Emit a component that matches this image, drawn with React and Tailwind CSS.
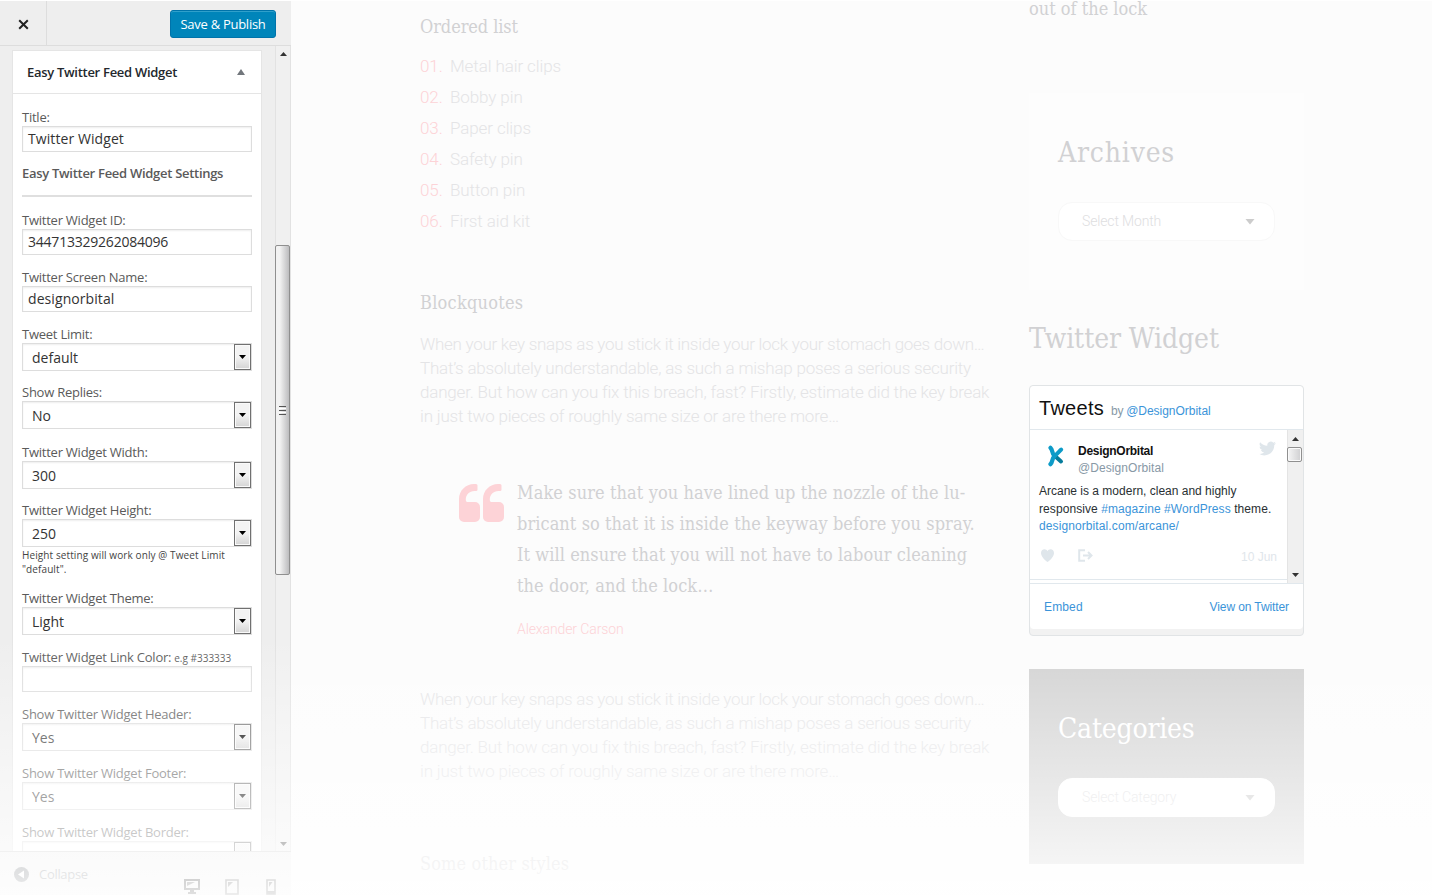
import React from "react";

const SERIF = "font-['DejaVu_Serif_Condensed','DejaVu_Serif',serif] [font-stretch:condensed]";

function Label({ children, note, className = "" }) {
  return (
    <div className={`h-[18px] leading-[18px] text-[13px] tracking-[-0.24px] text-[#5a5a5a] whitespace-nowrap ${className}`}>
      {children}
      {note && <span className="ml-[3px] text-[10px] tracking-normal">{note}</span>}
    </div>
  );
}

function TextInput({ value, className = "" }) {
  return (
    <div className={`h-[26px] border border-[#ddd] bg-white px-[5px] text-[14px] leading-[24px] text-[#333] shadow-[inset_0_1px_2px_rgba(0,0,0,0.07)] whitespace-nowrap ${className}`}>
      {value}
    </div>
  );
}

function Select({ value }) {
  return (
    <div className="flex h-7 items-stretch justify-between border border-[#ddd] bg-white pl-[9px] text-[14px] leading-[27px] text-[#333] shadow-[inset_0_1px_2px_rgba(0,0,0,0.07)]">
      <span>{value}</span>
      <span className="flex w-[17px] items-center justify-center border border-[#707070] bg-linear-to-b from-[#f3f3f3] from-50% to-[#d4d4d4] shadow-[inset_0_0_0_1px_#fafafa]">
        <svg width="7" height="4" viewBox="0 0 7 4"><path d="M0 0h7L3.5 4z" fill="#000" /></svg>
      </span>
    </div>
  );
}

function Arrow({ up, className = "" }) {
  return (
    <svg className={className} width="7" height="4" viewBox="0 0 7 4">
      <path d={up ? "M0 4h7L3.5 0z" : "M0 0h7L3.5 4z"} fill="#333" />
    </svg>
  );
}

function Sidebar() {
  return (
    <aside className="flex h-[895px] w-[291px] flex-none flex-col border-t border-[#fafafa] bg-[#eee] font-['Open_Sans',sans-serif]">
      <header className="flex h-[45px] flex-none justify-between border-b border-[#ddd]">
        <div className="flex w-[47px] items-center justify-center border-r border-[#ddd]">
          <svg width="11" height="11" viewBox="0 0 11 11" className="mt-[2px]"><path d="M1.2 1.2l8.6 8.6M9.8 1.2L1.2 9.8" stroke="#222" strokeWidth="2" /></svg>
        </div>
        <div className="mr-[15px] mt-[9px] h-[28px] w-[106px] rounded-[3px] border border-[#0073aa] bg-[#0085ba] text-center text-[13px] leading-[26px] tracking-[-0.27px] text-white shadow-[inset_0_1px_0_rgba(120,200,230,0.4)]">
          Save &amp; Publish
        </div>
      </header>
      <div className="flex h-[805px] flex-none overflow-hidden">
        <div className="flex-1 pl-3 pt-1">
          <section className="h-[900px] w-[250px] border border-[#e5e5e5] bg-white">
            <div className="flex h-[43px] items-center justify-between border-b border-[#e5e5e5] pl-[14px] pr-[16px] text-[13px] font-semibold tracking-[-0.29px] text-[#23282d]">
              <span className="pt-px">Easy Twitter Feed Widget</span>
              <svg width="8" height="6" viewBox="0 0 8 6"><path d="M0 6h8L4 0z" fill="#72777c" /></svg>
            </div>
            <div className="pl-[9px] pr-[9px] pt-[14px]">
              <Label>Title:</Label>
              <TextInput value="Twitter Widget" className="tracking-[0.08px]" />
              <h3 className="mt-3 h-[18px] text-[13px] font-semibold leading-[18px] tracking-[-0.29px] text-[#5a5a5a] whitespace-nowrap">Easy Twitter Feed Widget Settings</h3>
              <div className="mt-[13px] h-[2px] bg-[#dfdfdf]" />
              <Label className="mt-[14px]">Twitter Widget ID:</Label>
              <TextInput value="344713329262084096" className="tracking-[-0.22px]" />
              <Label className="mt-[13px]">Twitter Screen Name:</Label>
              <TextInput value="designorbital" className="tracking-[0.08px]" />
              <Label className="mt-[13px]">Tweet Limit:</Label>
              <Select value="default" />
              <Label className="mt-[12px]">Show Replies:</Label>
              <Select value="No" />
              <Label className="mt-[14px]">Twitter Widget Width:</Label>
              <Select value="300" />
              <Label className="mt-[12px]">Twitter Widget Height:</Label>
              <Select value="250" />
              <p className="mt-[1px] h-[29px] text-[10px] leading-[14px] tracking-[0.1px] text-[#444]">Height setting will work only @ Tweet Limit<br />"default".</p>
              <Label className="mt-[12px]">Twitter Widget Theme:</Label>
              <Select value="Light" />
              <Label className="mt-[13px]" note="e.g #333333">Twitter Widget Link Color:</Label>
              <TextInput value="" />
              <Label className="mt-[13px]">Show Twitter Widget Header:</Label>
              <Select value="Yes" />
              <Label className="mt-[13px]">Show Twitter Widget Footer:</Label>
              <Select value="Yes" />
              <Label className="mt-[13px]">Show Twitter Widget Border:</Label>
              <Select value="" />
            </div>
          </section>
        </div>
        <div className="flex w-4 flex-none flex-col items-center border-x border-[#e2e2e2] bg-[#f0f0f0]">
          <Arrow up className="mt-[6px] flex-none" />
          <div className="mt-[189px] ml-[-1px] flex h-[330px] w-[15px] flex-none flex-col items-center justify-center gap-px self-start rounded-[2px] border border-[#8f8f8f] bg-linear-to-r from-[#f2f2f2] from-30% to-[#bcbcbe]">
            <div className="h-px w-[7px] bg-[#555]" /><div className="h-px w-[7px] bg-white" />
            <div className="h-px w-[7px] bg-[#555]" /><div className="h-px w-[7px] bg-white" />
            <div className="h-px w-[7px] bg-[#555]" />
          </div>
          <Arrow className="mt-[267px] flex-none" />
        </div>
      </div>
      <footer className="flex flex-1 overflow-hidden border-t border-[#ccc] pl-[14px]">
        <svg className="mt-[15px] flex-none" width="15" height="15" viewBox="0 0 15 15"><circle cx="7.5" cy="7.5" r="7.5" fill="#62676c" /><path d="M10 3.5v8l-6-4z" fill="#fff" /></svg>
        <span className="ml-[10px] mt-[13px] h-[18px] text-[13px] leading-[19px] tracking-[-0.3px] text-[#72777c]">Collapse</span>
        <svg className="ml-[96px] mt-[27px] flex-none" width="16" height="15" viewBox="0 0 16 15"><path d="M1 1h14v9H1z" fill="none" stroke="#000" strokeWidth="2" /><path d="M6 10h4v3h2v2H4v-2h2z" fill="#000" /><path d="M3 3h8L3 7z" fill="#333" /></svg>
        <svg className="ml-[25px] mt-[27px] flex-none" width="14" height="16" viewBox="0 0 14 16"><path d="M1 1h12v14H1z" fill="none" stroke="#444" strokeWidth="1.6" /><path d="M3 3h5L3 8z" fill="#444" /></svg>
        <svg className="ml-[27px] mt-[27px] flex-none" width="10" height="16" viewBox="0 0 10 16"><path d="M1 1h8v14H1z" fill="none" stroke="#444" strokeWidth="1.6" /><path d="M3 3h3.500L3 8zM1 12h8v3H1z" fill="#444" /></svg>
      </footer>
    </aside>
  );
}

const ITEMS = ["Metal hair clips", "Bobby pin", "Paper clips", "Safety pin", "Button pin", "First aid kit"];

function Paragraph({ className = "" }) {
  return (
    <p className={`text-[17px] font-light leading-[24px] text-[#e4e4e6] whitespace-nowrap ${className}`}>
      <span className="tracking-[-0.28px]">When your key snaps as you stick it inside your lock your stomach goes down…</span><br />
      <span className="tracking-[-0.21px]">That’s absolutely understandable, as such a mishap poses a serious security</span><br />
      <span className="tracking-[-0.19px]">danger. But how can you fix this breach, fast? Firstly, estimate did the key break</span><br />
      <span className="tracking-[-0.19px]">in just two pieces of roughly same size or are there more…</span>
    </p>
  );
}

const QUOTE_MARK = "M17 0h-2C6.700 0 0 6.700 0 15v18a5 5 0 0 0 5 5h11a5 5 0 0 0 5-5V23a5 5 0 0 0-5-5H9c-1.500 0-2.200-.8-2.200-2.300C6.800 10.500 10.300 7 15.500 7H17a1.500 1.500 0 0 0 1.500-1.500v-4A1.500 1.500 0 0 0 17 0z";

function Article() {
  const heading = `h-6 text-[18px] leading-6 text-[#d1d1d3] ${SERIF}`;
  return (
    <main className="w-[609px] flex-none pt-[15px] font-['Roboto',sans-serif]">
      <h2 className={`tracking-[-0.08px] ${heading}`}>Ordered list</h2>
      <ol className="mt-[12px] text-[17px] font-light leading-[31px] tracking-[-0.1px] text-[#e4e4e6]">
        {ITEMS.map((t, i) => (
          <li key={t} className="flex h-[31px]"><span className="w-[30px] text-[#fdd3d7]">0{i + 1}.</span>{t}</li>
        ))}
      </ol>
      <h2 className={`mt-[54px] tracking-[0.25px] ${heading}`}>Blockquotes</h2>
      <Paragraph className="mt-[17px]" />
      <blockquote className="mt-[49px] flex pl-[39px]">
        <svg className="mt-[7px] flex-none" width="45" height="38" viewBox="0 0 45 38" fill="#fdd3d7">
          <path d={QUOTE_MARK} />
          <path transform="translate(24)" d={QUOTE_MARK} />
        </svg>
        <div className="ml-[13px]">
          <p className={`text-[18px] leading-[31px] tracking-[0.07px] text-[#d1d1d3] whitespace-nowrap ${SERIF}`}>
            <span className="tracking-[0.1px]">Make sure that you have lined up the nozzle of the lu-</span><br />
            bricant so that it is inside the keyway before you spray.<br />
            It will ensure that you will not have to labour cleaning<br />
            the door, and the lock…
          </p>
          <cite className="mt-[19px] block h-[19px] text-[14px] font-light not-italic leading-[18px] tracking-[-0.1px] text-[#fdd3d7]">Alexander Carson</cite>
        </div>
      </blockquote>
      <Paragraph className="mt-[48px]" />
      <h2 className={`mt-[69px] tracking-[0.12px] ${heading}`}>Some other styles</h2>
    </main>
  );
}

function PillSelect({ children, className = "" }) {
  return (
    <div className={`flex h-[39px] w-[217px] items-center justify-between rounded-[14px] border bg-white pl-[23px] pr-[19px] font-['Roboto',sans-serif] text-[14px] font-light tracking-[-0.15px] ${className}`}>
      <span>{children}</span>
      <svg width="10" height="6" viewBox="0 0 10 6"><path d="M.5 0h9L5 5.500z" fill="#ccc" /></svg>
    </div>
  );
}

function TweetsWidget() {
  const link = "text-[#3b94d9]";
  return (
    <div className="mt-[26px] h-[251px] w-[275px] rounded-[4px] border border-[#e1e4e6] bg-[#f2f2f2] font-['Liberation_Sans',Arial,sans-serif] text-[12px] text-[#292f33]">
      <div className="flex h-[243px] flex-col rounded-[4px] bg-white">
        <div className="flex h-[44px] flex-none items-baseline border-b border-[#e1e8ed] pl-[9px] pt-[8px]">
          <span className="text-[20px] leading-[28px] tracking-[0.28px] text-[#111]">Tweets</span>
          <span className="ml-[7px] tracking-[-0.3px] text-[#8899a6]">by</span>
          <span className={`ml-[3px] tracking-[-0.02px] ${link}`}>@DesignOrbital</span>
        </div>
        <div className="flex h-[153px] flex-none">
          <div className="flex-1">
            <div className="h-[150px] border-b border-[#e1e8ed] pl-[9px] pr-[10px] pt-[12px]">
              <div className="flex">
                <svg className="ml-[8px] mt-[3px] flex-none" width="18" height="22" viewBox="0 0 18 22" fill="none" strokeLinecap="round">
                  <path d="M8.500 11.500l5.500 5" stroke="#067c9c" strokeWidth="4" />
                  <path d="M3.500 2.800C6 5 4.500 8 7.500 11" stroke="#0d9bc8" strokeWidth="4.200" />
                  <path d="M7.500 11C4.500 14 6 17 3.500 19.200" stroke="#0d9bc8" strokeWidth="4.200" />
                  <path d="M14.200 4.500C12 6.500 11 8 8 10.500" stroke="#0d9bc8" strokeWidth="4" />
                </svg>
                <div className="ml-[13px] mt-px flex-1 leading-[17px]">
                  <div className="font-bold tracking-[-0.28px] text-[#111]">DesignOrbital</div>
                  <div className="tracking-[0.08px] text-[#8899a6]">@DesignOrbital</div>
                </div>
                <svg className="mt-[-2px] mr-[1px] flex-none" width="17" height="17" viewBox="0 0 24 24" fill="#dfe6eb"><path d="M23.950 4.570a10 10 0 0 1-2.820.770 4.960 4.960 0 0 0 2.160-2.720 9.900 9.900 0 0 1-3.120 1.190 4.920 4.920 0 0 0-8.380 4.480A13.930 13.930 0 0 1 1.640 3.160a4.920 4.920 0 0 0 1.520 6.570 4.900 4.900 0 0 1-2.230-.610v.060a4.920 4.920 0 0 0 3.950 4.830 5 5 0 0 1-2.210.080 4.940 4.940 0 0 0 4.600 3.420A9.870 9.870 0 0 1 0 19.540a13.990 13.990 0 0 0 7.550 2.210c9.050 0 14-7.500 14-13.980 0-.210 0-.420-.020-.630a9.940 9.940 0 0 0 2.460-2.550z" /></svg>
              </div>
              <p className="mt-[6px] leading-[17.500px] whitespace-nowrap">
                Arcane is a modern, clean and highly<br />
                <span className="tracking-[0.08px]">responsive <span className={link}>#magazine</span> <span className={link}>#WordPress</span> theme.</span><br />
                <span className={`tracking-[0.1px] ${link}`}>designorbital.com/arcane/</span>
              </p>
              <div className="mt-[11px] flex h-[18px] items-center text-[#dfe6eb]">
                <svg className="ml-[2px]" width="13" height="13" viewBox="0 0 13 13"><path d="M6.500 13C3.500 11 0 7.500 0 4 0 1.800 1.500.3 3.400.3c1.400 0 2.500.7 3.100 1.900C7.100 1 8.200.3 9.600.3 11.500.3 13 1.800 13 4c0 3.500-3.500 7-6.500 9z" fill="#dfe6eb" /></svg>
                <svg className="ml-[24px]" width="15" height="13" viewBox="0 0 15 13" fill="none" stroke="#dfe6eb" strokeWidth="2"><path d="M7 1.200H1.200v10.600H7M5 6.500h8M10 3l3.500 3.500L10 10" /></svg>
                <span className="ml-auto mt-[3px]">10 Jun</span>
              </div>
            </div>
          </div>
          <div className="flex w-[16px] flex-none flex-col items-center border-l border-[#e4e4e4] bg-[#f0f0f0] pr-px">
            <Arrow up className="mt-[7px] flex-none" />
            <div className="mt-[6px] ml-[-1px] h-[15px] w-[15px] flex-none self-start rounded-[2px] border border-[#909090] bg-linear-to-r from-[#f5f5f5] to-[#cfcfd1] shadow-[inset_0_0_0_1px_#fafafa]" />
            <Arrow className="mt-[111px] flex-none" />
          </div>
        </div>
        <div className={`flex flex-1 items-center justify-between border-t border-[#e1e8ed] pl-[14px] pr-[14px] ${link}`}>
          <span className="tracking-[0.15px]">Embed</span><span className="tracking-[-0.1px]">View on Twitter</span>
        </div>
      </div>
    </div>
  );
}

function Aside() {
  const title = `h-10 text-[28px] leading-10 ${SERIF}`;
  return (
    <aside className="h-[895px] w-[275px] flex-none">
      <div className={`mt-px h-4 text-[18px] leading-4 text-[#d1d1d3] ${SERIF}`}>out of the lock</div>
      <section className="mt-[76px] h-[197px] bg-[#fdfdfd] pl-[29px] pt-[40px]">
        <h2 className={`${title} tracking-[0.8px] text-[#d1d1d3]`}>Archives</h2>
        <PillSelect className="mt-[29px] border-[#f8f8f8] text-[#dededf]">Select Month</PillSelect>
      </section>
      <h2 className={`mt-[29px] ${title} tracking-[-0.1px] text-[#d1d1d3]`}>Twitter Widget</h2>
      <TweetsWidget />
      <section className="mt-[33px] h-[195px] bg-[#d2d2d2] pl-[29px] pt-[40px]">
        <h2 className={`${title} tracking-[-0.2px] text-white`}>Categories</h2>
        <PillSelect className="mt-[29px] border-white text-[#dededf]">Select Category</PillSelect>
      </section>
    </aside>
  );
}

export default function App() {
  return (
    <div className="relative flex h-[895px] w-[1432px] overflow-hidden border-t border-white bg-[#fcfcfc]">
      <div className="mt-[-1px] flex">
        <Sidebar />
        <div className="flex pl-[129px]">
          <Article />
          <Aside />
        </div>
      </div>
      <div className="pointer-events-none absolute inset-x-0 bottom-0 h-[259px] bg-linear-to-b from-white/0 to-white/88" />
    </div>
  );
}
